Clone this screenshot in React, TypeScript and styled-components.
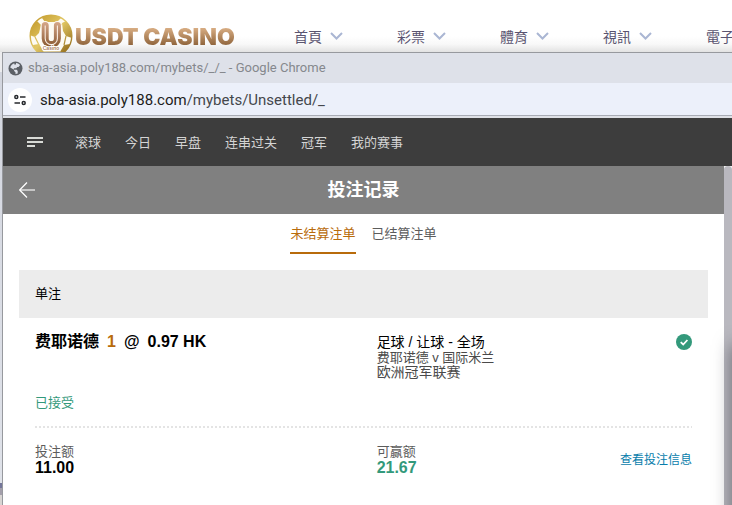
import React from "react";
import styled, { createGlobalStyle } from "styled-components";

const GlobalStyle = createGlobalStyle`
  * { box-sizing: border-box; }
  html, body { margin: 0; background: #fff; overflow: hidden; }
  button { border: 0; padding: 0; background: none; font: inherit; color: inherit; cursor: pointer; }
  a { color: inherit; text-decoration: none; }
  h1, h2, p, dl, dd, dt { margin: 0; font: inherit; }
  svg { display: block; flex: none; }
`;

const Page = styled.div`
  display: flex;
  flex-direction: column;
  height: 100vh;
  overflow: hidden;
  font-family: "Liberation Sans", "Noto Sans CJK SC", sans-serif;
  font-size: 13px;
  line-height: 15px;
  color: #000;
`;

const SiteHeader = styled.header`
  display: flex;
  flex: none;
  height: 52px;
  overflow: hidden;
  background: linear-gradient(#fff 70%, #f8f8f8 85%, #e2e2e2);
`;

const Brand = styled.a`
  display: flex;
  align-items: flex-start;
  width: 294px;
  flex: none;
  padding: 14px 0 0 29px;
`;

const BrandName = styled.span`
  margin-top: 8px;
  padding-left: 1px;
  font: 900 23px/30px Inter, sans-serif;
  white-space: nowrap;
  color: transparent;
  background: linear-gradient(#d8ad83 20%, #8d6239 80%);
  background-clip: text;
`;

const SiteNav = styled.nav`
  display: grid;
  grid-auto-flow: column;
  grid-auto-columns: 103px;
  padding-top: 26px;
`;

const SiteNavItem = styled.button`
  display: flex;
  align-items: center;
  gap: 8px;
  height: 20px;
  font: 14px/20px "Noto Sans CJK TC", sans-serif;
  white-space: nowrap;
  color: #5a5470;
`;

const Desktop = styled.div`
  display: flex;
  flex: 1;
  min-height: 0;
`;

const DesktopEdge = styled.div`
  width: 2px;
  flex: none;
  background: linear-gradient(
    #ececee 20px, #d3d6df 20px, #dfe2e9 431px,
    #74769a 431px, #74769a 436px, #a39fab 436px, #a39fab 443px, #d8d5d3 443px
  );
`;

const BrowserWindow = styled.section`
  position: relative;
  display: flex;
  flex-direction: column;
  flex: 1;
  min-width: 0;
  border-top: 1px solid #97999e;
  border-left: 1px solid #97999e;
  background: #fff;
`;

const TitleBar = styled.div`
  display: flex;
  align-items: center;
  gap: 5px;
  flex: none;
  height: 30px;
  padding-left: 5px;
  background: #dee1e9;
  font: 13px/18px Roboto, sans-serif;
  color: #85888d;
`;

const AddressBar = styled.div`
  display: flex;
  align-items: center;
  gap: 8px;
  flex: none;
  height: 35px;
  padding-left: 5px;
  background: #ecf0fa;
  border-bottom: 2px solid #dfe1e6;
  box-shadow: inset 0 -1px #a9acb5;
  font: 15px/20px Roboto, sans-serif;
  color: #44474c;
`;

const SiteInfoButton = styled.button`
  display: grid;
  place-items: center;
  width: 24px;
  height: 24px;
  border-radius: 50%;
  background: #fff;
`;

const Domain = styled.span`
  color: #1c1d20;
`;

const SportsNav = styled.nav`
  display: flex;
  align-items: center;
  gap: 24px;
  flex: none;
  height: 48px;
  padding-left: 24px;
  background: #3d3d3d;
  color: #d4d4d4;
`;

const MenuButton = styled.button`
  margin-right: 8px;
`;

const Viewport = styled.div`
  display: flex;
  flex: 1;
  min-height: 0;
`;

const Content = styled.main`
  flex: 1;
  min-width: 0;
`;

const ScrollTrack = styled.div`
  width: 8px;
  flex: none;
  background: #f1f1f1;
`;

const ScrollThumb = styled.div`
  height: 100%;
  border-radius: 4px 4px 0 0;
  background: #b9b8bf;
`;

const PageHeader = styled.header`
  display: grid;
  grid-template-columns: 16px 1fr 16px;
  align-items: center;
  height: 48px;
  padding: 0 16px;
  background: #808080;
  color: #fff;
`;

const PageTitle = styled.h1`
  font-size: 18px;
  line-height: 24px;
  font-weight: 700;
  text-align: center;
`;

const Tabs = styled.div`
  display: flex;
  justify-content: center;
  gap: 16px;
`;

const Tab = styled.button<{ $active?: boolean }>`
  height: 40px;
  border-bottom: 2px solid ${(p) => (p.$active ? "#b86b0b" : "transparent")};
  color: ${(p) => (p.$active ? "#b86b0b" : "#5c5c5c")};
`;

const BetCard = styled.article`
  margin: 16px 16px 0;
`;

const BetType = styled.h2`
  height: 48px;
  padding: 0 16px;
  line-height: 48px;
  background: #ececec;
`;

const BetBody = styled.div`
  padding: 0 16px;
`;

const BetRow = styled.div`
  display: grid;
  grid-template-columns: 52fr 48fr;
`;

const SelectionRow = styled(BetRow)`
  height: 108px;
  padding-top: 16px;
`;

const Selection = styled.div`
  display: flex;
  flex-direction: column;
  justify-content: space-between;
`;

const Pick = styled.p`
  display: flex;
  gap: 8px;
  font-size: 16px;
  line-height: 16px;
  font-weight: 700;
`;

const Handicap = styled.span`
  color: #b86b0b;
`;

const Status = styled.p`
  padding-bottom: 16px;
  color: #33997b;
`;

const EventCell = styled.div`
  display: flex;
  justify-content: space-between;
  align-items: flex-start;
`;

const EventInfo = styled.div`
  padding-top: 1px;
`;

const Market = styled.p`
  font-size: 14px;
`;

const Teams = styled.p`
  color: #4a4a4a;
`;

const League = styled(Teams)`
  font-size: 14px;
`;

const Divider = styled.div`
  height: 2px;
  background: repeating-linear-gradient(90deg, #e4e4e4 0 2px, transparent 2px 4px);
`;

const StakeRow = styled(BetRow)`
  padding-top: 16px;
`;

const Amount = styled.dl<{ $win?: boolean }>`
  line-height: 16px;
  dt { color: #5c5c5c; }
  dd {
    font-size: 16px;
    font-weight: 700;
    color: ${(p) => (p.$win ? "#33997b" : "#000")};
  }
`;

const PayoutCell = styled.div`
  display: flex;
  justify-content: space-between;
  align-items: center;
`;

const DetailLink = styled.a`
  font-size: 12px;
  color: #087dab;
`;

const NeighbourShade = styled.div`
  position: absolute;
  left: 100%;
  top: 292px;
  bottom: -40px;
  width: 20px;
  pointer-events: none;
  box-shadow: 0 0 18px 0 rgba(30, 30, 40, 0.5);
`;

function BallLogo() {
  return (
    <svg width="45" height="45" viewBox="0 0 45 45" aria-hidden="true">
      <defs>
        <linearGradient id="gold" gradientUnits="userSpaceOnUse" x1="4" y1="4" x2="40" y2="42">
          <stop offset="0" stopColor="#c39a2c" />
          <stop offset="0.45" stopColor="#e2c865" />
          <stop offset="1" stopColor="#8a6212" />
        </linearGradient>
        <linearGradient id="bronze" gradientUnits="userSpaceOnUse" x1="0" y1="8" x2="0" y2="32">
          <stop offset="0" stopColor="#d6a88a" />
          <stop offset="1" stopColor="#8b5b34" />
        </linearGradient>
        <clipPath id="ball"><circle cx="22" cy="22" r="21" /></clipPath>
      </defs>
      <circle cx="22" cy="22" r="21" fill="#fdfbf3" />
      <g clipPath="url(#ball)" fill="url(#gold)">
        <path d="M13 4 18 0h9l5 4-4 4H16z" />
        <path d="M2 12 8 7l4 4-2 8-4 4-6-2z" />
        <path d="M33 9l4-2 6 9v8l-6-2-3-5z" />
        <path d="M4 31l6-1 5 8v6l-9-5z" />
        <path d="M31 38l4-7 6-1-3 9-8 5z" />
      </g>
      <g fill="none" stroke="url(#gold)" strokeWidth="1.200">
        <circle cx="22" cy="22" r="20.800" strokeWidth="1.400" />
        <path d="M12 11l4-3M28 8l5 3M6 23l4 8M37 22l-2 9M15 38h16" />
      </g>
      <path d="M16.200 11.500v13a6.100 6.100 0 0 0 12.200 0v-13" fill="none" stroke="#fdfbf3" strokeWidth="9" strokeLinecap="round" />
      <path d="M16.200 11.500v13a6.100 6.100 0 0 0 12.200 0v-13" fill="none" stroke="url(#bronze)" strokeWidth="7" strokeLinecap="round" />
      <path d="M16.200 11.500v13a6.100 6.100 0 0 0 12.200 0v-13" fill="none" stroke="#fbeee2" strokeWidth="1.100" />
      <text x="22" y="36" textAnchor="middle" fontFamily="Inter, sans-serif" fontSize="5" fontWeight="600" fill="#a87b58" stroke="#fff" strokeWidth="2" paintOrder="stroke">Casino</text>
    </svg>
  );
}

const Chevron = () => (
  <svg width="13" height="8" viewBox="0 0 13 8" fill="none" stroke="#aab6d3" strokeWidth="2" aria-hidden="true">
    <path d="M1 1l5.500 5.500L12 1" />
  </svg>
);

const Globe = () => (
  <svg width="15" height="15" viewBox="0 0 15 15" aria-hidden="true">
    <circle cx="7.500" cy="7.500" r="7" fill="#5c6066" />
    <path d="M8 2c2 0 3.300 1 4 2.200L10.500 6H9.300L8.200 7.200H5.900v1.500h2.900l.9 1.200v2.700c-.7.300-1.400.4-2.200.4v-1.700l-1.400-1.300V8.700L2.200 6.600C2.600 4.500 4.200 2.800 6.300 2.200v1.400H8z" fill="#dee1e9" />
  </svg>
);

const Tune = () => (
  <svg width="12" height="12" viewBox="0 0 12 12" fill="none" stroke="#27292d" strokeWidth="1.500" aria-hidden="true">
    <circle cx="2.300" cy="3" r="1.500" />
    <path d="M6 3h5.500M.5 9H6" />
    <circle cx="9.700" cy="9" r="1.500" />
  </svg>
);

const MenuLines = () => (
  <svg width="16" height="10" viewBox="0 0 16 10" fill="#d8dad6" aria-hidden="true">
    <path d="M0 0h16v2H0zM0 4h16v2H0zM0 8h8v2H0z" />
  </svg>
);

const BackArrow = () => (
  <svg width="16" height="16" viewBox="0 0 16 16" fill="none" aria-hidden="true">
    <path d="M1 8h15" stroke="#c6c6c6" strokeWidth="2" />
    <path d="M8 .5L.7 8 8 15.500" stroke="#fff" strokeWidth="1.200" />
  </svg>
);

const Accepted = () => (
  <svg width="16" height="16" viewBox="0 0 16 16" role="img" aria-label="已接受">
    <circle cx="8" cy="8" r="8" fill="#33997b" />
    <path d="M4.700 8.200l2.500 2.300 4.200-4.500" fill="none" stroke="#fff" strokeWidth="1.800" />
  </svg>
);

const siteItems = ["首頁", "彩票", "體育", "視訊", "電子"];
const sportsItems = ["滚球", "今日", "早盘", "连串过关", "冠军", "我的赛事"];

export default function App() {
  return (
    <Page>
      <GlobalStyle />
      <SiteHeader>
        <Brand href="#">
          <BallLogo />
          <BrandName>USDT CASINO</BrandName>
        </Brand>
        <SiteNav>
          {siteItems.map((label) => (
            <SiteNavItem key={label}>
              {label}
              <Chevron />
            </SiteNavItem>
          ))}
        </SiteNav>
      </SiteHeader>
      <Desktop>
        <DesktopEdge />
        <BrowserWindow>
          <TitleBar>
            <Globe />
            sba-asia.poly188.com/mybets/_/_ - Google Chrome
          </TitleBar>
          <AddressBar>
            <SiteInfoButton aria-label="Site information"><Tune /></SiteInfoButton>
            <span><Domain>sba-asia.poly188.com</Domain>/mybets/Unsettled/_</span>
          </AddressBar>
          <SportsNav>
            <MenuButton aria-label="菜单"><MenuLines /></MenuButton>
            {sportsItems.map((label) => <a key={label} href="#">{label}</a>)}
          </SportsNav>
          <Viewport>
            <Content>
              <PageHeader>
                <button aria-label="返回"><BackArrow /></button>
                <PageTitle>投注记录</PageTitle>
              </PageHeader>
              <Tabs role="tablist">
                <Tab role="tab" aria-selected="true" $active>未结算注单</Tab>
                <Tab role="tab" aria-selected="false">已结算注单</Tab>
              </Tabs>
              <BetCard>
                <BetType>单注</BetType>
                <BetBody>
                  <SelectionRow>
                    <Selection>
                      <Pick>
                        <span>费耶诺德</span>
                        <Handicap>1</Handicap>
                        <span>@</span>
                        <span>0.97 HK</span>
                      </Pick>
                      <Status>已接受</Status>
                    </Selection>
                    <EventCell>
                      <EventInfo>
                        <Market>足球 / 让球 - 全场</Market>
                        <Teams>费耶诺德 v 国际米兰</Teams>
                        <League>欧洲冠军联赛</League>
                      </EventInfo>
                      <Accepted />
                    </EventCell>
                  </SelectionRow>
                  <Divider />
                  <StakeRow>
                    <Amount>
                      <dt>投注额</dt>
                      <dd>11.00</dd>
                    </Amount>
                    <PayoutCell>
                      <Amount $win>
                        <dt>可赢额</dt>
                        <dd>21.67</dd>
                      </Amount>
                      <DetailLink href="#">查看投注信息</DetailLink>
                    </PayoutCell>
                  </StakeRow>
                </BetBody>
              </BetCard>
            </Content>
            <ScrollTrack><ScrollThumb /></ScrollTrack>
          </Viewport>
          <NeighbourShade />
        </BrowserWindow>
      </Desktop>
    </Page>
  );
}
